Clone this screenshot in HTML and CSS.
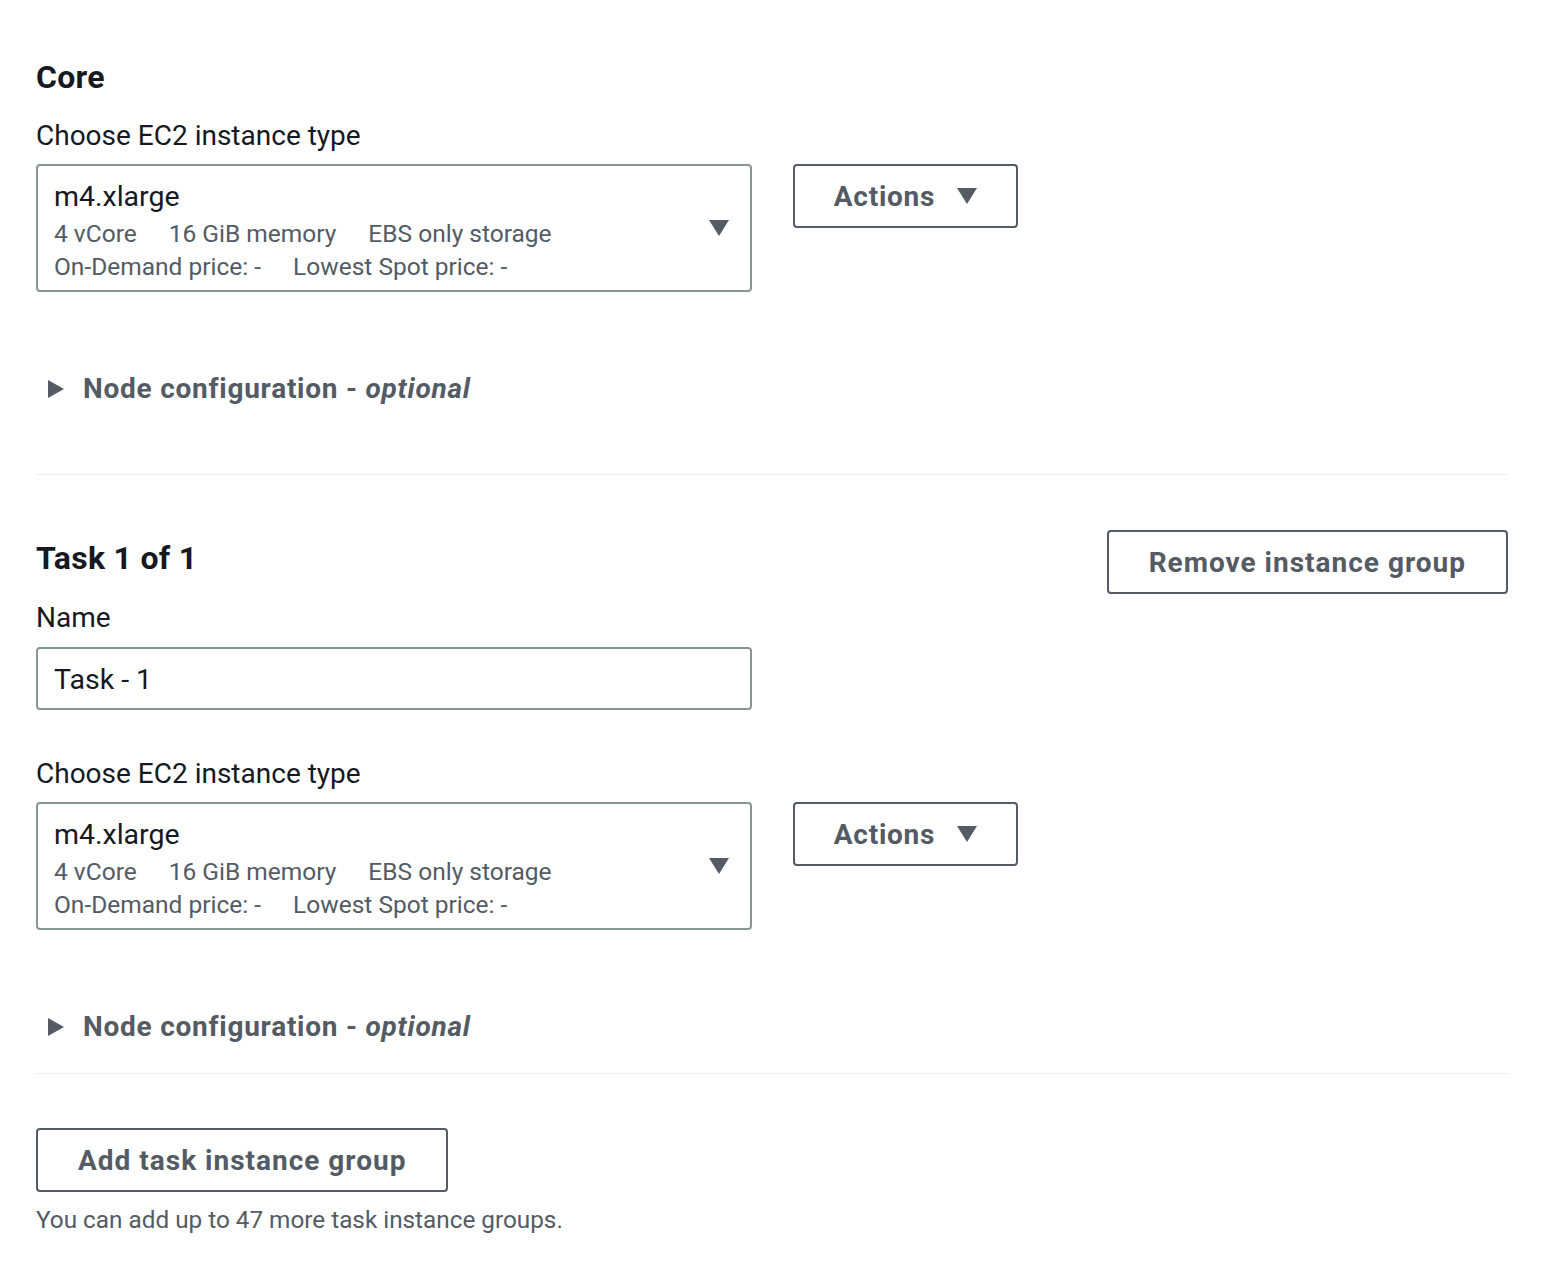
FILE: index.html
```html
<!DOCTYPE html>
<html lang="en">
<head>
<meta charset="utf-8">
<title>Instance groups</title>
<link rel="stylesheet" href="styles.css">
</head>
<body>
<main class="page">
  <section class="group">
    <h2 class="group-title">Core</h2>
    <div class="field">
      <label class="label">Choose EC2 instance type</label>
      <div class="select-row">
        <div class="select">
          <div class="select-text">
            <div class="select-value">m4.xlarge</div>
            <div class="select-meta"><span>4 vCore</span><span>16 GiB memory</span><span>EBS only storage</span></div>
            <div class="select-meta"><span>On-Demand price: -</span><span>Lowest Spot price: -</span></div>
          </div>
          <span class="caret caret-select"></span>
        </div>
        <button class="btn btn-actions">Actions <span class="caret caret-btn"></span></button>
      </div>
    </div>
    <div class="expander"><span class="tri-right"></span><span class="exp-label">Node configuration - <i>optional</i></span></div>
  </section>

  <hr class="divider divider-1">

  <section class="group">
    <div class="group-head">
      <h2 class="group-title task-title">Task 1 of 1</h2>
      <button class="btn">Remove instance group</button>
    </div>
    <div class="field">
      <label class="label">Name</label>
      <div class="input">Task - 1</div>
    </div>
    <div class="field field-2">
      <label class="label">Choose EC2 instance type</label>
      <div class="select-row">
        <div class="select">
          <div class="select-text">
            <div class="select-value">m4.xlarge</div>
            <div class="select-meta"><span>4 vCore</span><span>16 GiB memory</span><span>EBS only storage</span></div>
            <div class="select-meta"><span>On-Demand price: -</span><span>Lowest Spot price: -</span></div>
          </div>
          <span class="caret caret-select"></span>
        </div>
        <button class="btn btn-actions">Actions <span class="caret caret-btn"></span></button>
      </div>
    </div>
    <div class="expander"><span class="tri-right"></span><span class="exp-label">Node configuration - <i>optional</i></span></div>
  </section>

  <hr class="divider divider-2">

  <div class="add-block">
    <button class="btn">Add task instance group</button>
    <p class="hint">You can add up to 47 more task instance groups.</p>
  </div>
</main>
</body>
</html>
```

FILE: styles.css
```css
* { box-sizing: border-box; }
html, body { margin: 0; background: #ffffff; }
body {
  font-family: Roboto, "Open Sans", "Liberation Sans", sans-serif;
  color: #16191f;
}
.page {
  width: 1546px;
  padding: 59px 38px 0 36px;
}
.group-title {
  margin: 0;
  font-size: 32px;
  line-height: 36px;
  font-weight: 700;
  letter-spacing: 0.3px;
  color: #16191f;
}
.field { display: flex; flex-direction: column; }
.label {
  display: block;
  margin-top: 23px;
  font-size: 28px;
  line-height: 36px;
  color: #16191f;
}
.select-row {
  display: flex;
  align-items: flex-start;
  gap: 41px;
  margin-top: 10px;
}
.select {
  width: 716px;
  height: 128px;
  border: 2px solid #879596;
  border-radius: 4px;
  padding: 11px 21px 0 16px;
  display: flex;
  align-items: center;
  justify-content: space-between;
}
.select-text { align-self: flex-start; }
.select-value {
  font-size: 28.5px;
  line-height: 40px;
  color: #16191f;
}
.select-meta {
  display: flex;
  gap: 32px;
  font-size: 24.5px;
  line-height: 33px;
  color: #545b64;
}
.caret {
  display: inline-block;
  width: 0;
  height: 0;
  border-left: 10px solid transparent;
  border-right: 10px solid transparent;
  border-top: 16px solid #545b64;
}
.caret-select { margin-top: -12px; }
.btn {
  font-family: inherit;
  height: 64px;
  padding: 0 40px;
  background: #ffffff;
  border: 2px solid #545b64;
  border-radius: 4px;
  font-size: 28px;
  font-weight: 700;
  letter-spacing: 1px;
  color: #545b64;
  display: inline-flex;
  align-items: center;
  justify-content: center;
  cursor: pointer;
}
.btn-actions { width: 225px; gap: 22px; padding: 0; letter-spacing: 0.75px; }
.expander {
  display: flex;
  align-items: center;
  margin-top: 79px;
  height: 36px;
  padding-left: 12px;
}
.tri-right {
  display: inline-block;
  width: 0;
  height: 0;
  border-top: 9px solid transparent;
  border-bottom: 9px solid transparent;
  border-left: 16px solid #545b64;
  margin-right: 19px;
}
.exp-label {
  font-size: 28px;
  line-height: 36px;
  font-weight: 700;
  letter-spacing: 0.75px;
  color: #545b64;
}
.exp-label i { font-style: italic; }
.divider {
  border: 0;
  height: 1px;
  background: #eaeded;
  margin: 0;
  width: 1472px;
}
.divider-1 { margin-top: 67px; }
.divider-2 { margin-top: 28px; }
.group-head {
  display: flex;
  justify-content: space-between;
  align-items: flex-start;
  margin-top: 55px;
}
.task-title { margin-top: 10px; }
.group-head + .field .label { margin-top: 6px; }
.input {
  margin-top: 11px;
  width: 716px;
  height: 63px;
  border: 2px solid #879596;
  border-radius: 4px;
  padding: 1px 16px 0;
  display: flex;
  align-items: center;
  font-size: 28.5px;
  color: #16191f;
}
.field-2 .label { margin-top: 46px; }
.add-block { margin-top: 54px; }
.hint {
  margin: 12px 0 0;
  font-size: 24.3px;
  line-height: 32px;
  color: #545b64;
}
```
